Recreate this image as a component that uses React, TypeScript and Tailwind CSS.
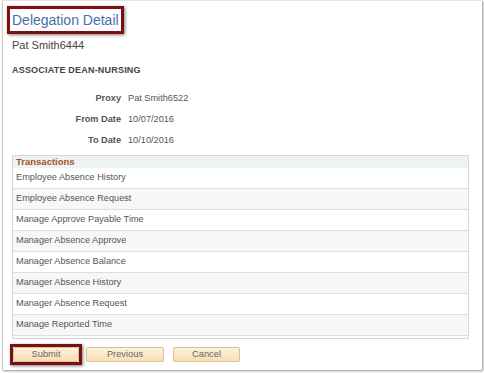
import React from 'react';

const TRANSACTIONS = [
  'Employee Absence History',
  'Employee Absence Request',
  'Manage Approve Payable Time',
  'Manager Absence Approve',
  'Manager Absence Balance',
  'Manager Absence History',
  'Manager Absence Request',
  'Manage Reported Time',
];

const FIELDS = [
  { label: 'Proxy', value: 'Pat Smith6522' },
  { label: 'From Date', value: '10/07/2016' },
  { label: 'To Date', value: '10/10/2016' },
];

const Button: React.FC<{ label: string; width: string }> = ({ label, width }) => (
  <button
    className={`${width} h-[15px] flex items-center justify-center rounded-[2px] border border-[#dcc08e] bg-gradient-to-b from-[#fdf1dc] to-[#f8dfb4] text-[9.3px] text-[#666] leading-none`}
  >
    {label}
  </button>
);

const App: React.FC = () => {
  return (
    <div className="w-[484px] h-[373px] bg-white font-['Liberation_Sans',Arial,sans-serif]">
      <div className="ml-[2px] w-[480px] h-[370px] bg-white border-l border-t border-l-[#c9c9c9] border-t-[#e6e6e6] shadow-[1px_1px_2px_rgba(0,0,0,0.45)] pt-[5px] pl-[9px]">
        {/* Title with highlight */}
        <div className="-ml-[5px] inline-flex h-[28px] items-center border-[3px] border-[#7a1014] px-[2px] shadow-[1px_1px_3px_rgba(0,0,0,0.5)]">
          <span className="text-[14px] leading-[22px] text-[#4a6ea8]">Delegation Detail</span>
        </div>

        <p className="mt-[5px] text-[11px] leading-[13px] text-[#444]">Pat Smith6444</p>
        <p className="mt-[12px] text-[9px] leading-[12px] font-bold text-[#444] tracking-[0.2px]">
          ASSOCIATE DEAN-NURSING
        </p>

        {/* Delegation fields */}
        <div className="mt-[12px] flex flex-col">
          {FIELDS.map(({ label, value }) => (
            <div key={label} className="flex h-[21px] items-center">
              <span className="w-[109px] text-right text-[9.2px] font-bold text-[#555]">{label}</span>
              <span className="ml-[7px] text-[9.2px] text-[#555]">{value}</span>
            </div>
          ))}
        </div>

        {/* Transactions grid */}
        <div className="mt-[4px] w-[457px] border border-[#d6d6d6] pb-[2px]">
          <div className="h-[12px] flex items-center bg-[#edf2f3] pl-[3px]">
            <span className="text-[9.5px] font-bold text-[#a4531d] leading-none">Transactions</span>
          </div>
          {TRANSACTIONS.map((name, i) => (
            <div
              key={name}
              className={`h-[21px] flex items-center pl-[3px] border-b border-[#dedede] ${i % 2 === 1 ? 'bg-[#f7f7f7]' : 'bg-white'}`}
            >
              <span className="text-[9.2px] text-[#555]">{name}</span>
            </div>
          ))}
        </div>

        {/* Buttons */}
        <div className="mt-[5px] flex items-center">
          <div className="-ml-[2px] border-[3px] border-[#7a1014] shadow-[1px_1px_3px_rgba(0,0,0,0.5)]">
            <Button label="Submit" width="w-[66px]" />
          </div>
          <div className="ml-[4px]">
            <Button label="Previous" width="w-[78px]" />
          </div>
          <div className="ml-[9px]">
            <Button label="Cancel" width="w-[67px]" />
          </div>
        </div>
      </div>
    </div>
  );
};

export default App;
